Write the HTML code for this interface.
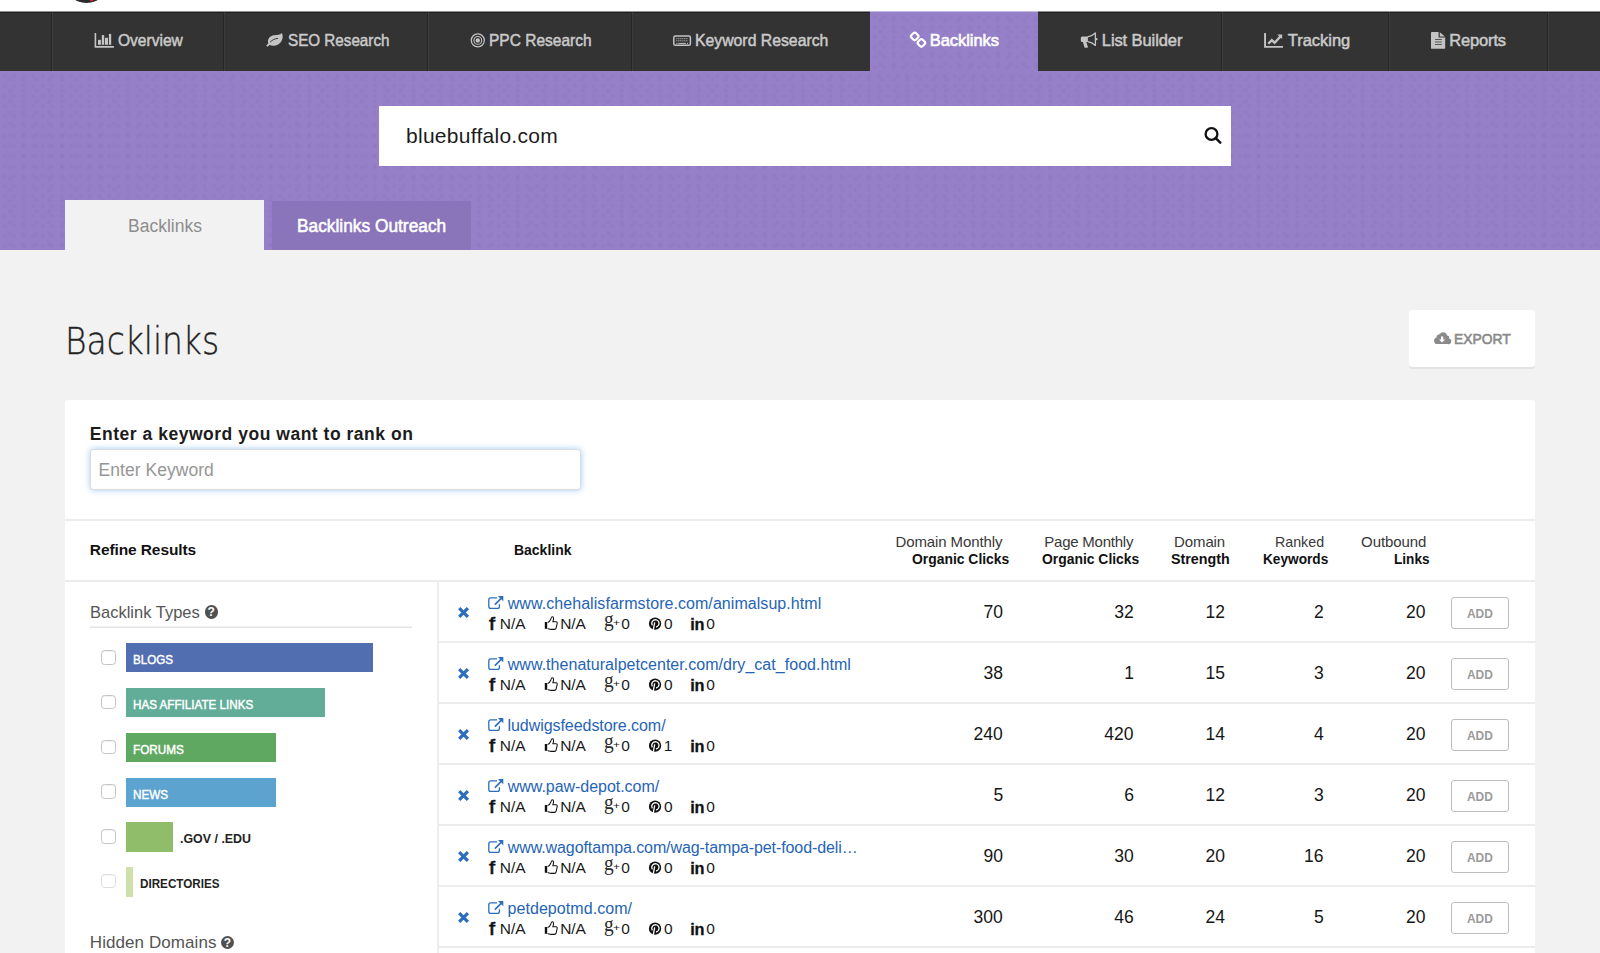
<!DOCTYPE html>
<html lang="en"><head><meta charset="utf-8"><title>Backlinks</title><style>
html,body{margin:0;padding:0}
body{width:1600px;height:953px;overflow:hidden;position:relative;background:#f2f2f2;font-family:"Liberation Sans",sans-serif}
.a{position:absolute}
.t{position:absolute;white-space:pre;line-height:normal}
#top{left:0;top:0;width:1600px;height:12px;background:#fff;border-bottom:1px solid #909090;box-sizing:border-box}
#nav{left:0;top:12px;width:1600px;height:59px;background:#333;border-top:1px solid #1f1f1f;box-sizing:border-box}
.dv{position:absolute;top:12px;width:1px;height:59px;background:#262626;box-shadow:1px 0 0 #3c3c3c}
#band{left:0;top:71px;width:1600px;height:179px;background:radial-gradient(circle,rgba(40,20,90,.035) 1px,rgba(40,20,90,0) 2.8px) 0 0/9.5px 10px,#9680c8 radial-gradient(circle,rgba(40,20,90,.03) 1px,rgba(40,20,90,0) 3px) 4px 3px/13px 11px}
#act{left:869.5px;top:11px;width:168.5px;height:60px;border-top:1px solid #c5b8e2;box-sizing:border-box;background:radial-gradient(circle,rgba(40,20,90,.035) 1px,rgba(40,20,90,0) 2.8px) 0 0/9.5px 10px,#9680c8 radial-gradient(circle,rgba(40,20,90,.03) 1px,rgba(40,20,90,0) 3px) 4px 3px/13px 11px}
#search{left:379px;top:106px;width:852px;height:60px;background:#fff}
#tab1{left:65px;top:200.2px;width:199px;height:50px;background:#f2f2f2}
#tab2{left:272px;top:201px;width:199px;height:49px;background:#8a74ba}
#export{left:1409px;top:310px;width:126px;height:57px;background:#fff;border-radius:3px;box-shadow:0 2px 0 #e2e2e2}
#card{left:65px;top:400px;width:1470px;height:560px;background:#fff;border-radius:3px}
#kw{left:90px;top:449px;width:490.5px;height:41.2px;box-sizing:border-box;background:#fff;border:1px solid #dcdcdc;border-radius:3.5px;box-shadow:0 0 6px rgba(100,170,240,.6)}
.hl{position:absolute;height:2px;background:#ececec}
.vl{position:absolute;width:2px;background:#ededed}
.bar{position:absolute;left:126px;height:29.3px}
.cb{position:absolute;left:101.3px;width:14.5px;height:14.5px;box-sizing:border-box;border:1px solid #c4c4c4;border-radius:3.5px;background:#fff;box-shadow:inset 0 1px 1px rgba(0,0,0,.06)}
.add{position:absolute;left:1450.8px;width:58.2px;height:31.5px;box-sizing:border-box;border:1px solid #bdbdbd;border-radius:3px;background:#fff}
.q{position:absolute;width:13.4px;height:13.4px;border-radius:50%;background:#505050;color:#fff;font:700 12px "Liberation Sans",sans-serif;text-align:center;line-height:14px}
</style></head><body>
<div class="a" id="top"></div>
<div class="a" style="left:64.2px;top:-42.2px;width:45.2px;height:45.2px;border-radius:50%;background:#2b2b2b;overflow:hidden"><div class="a" style="left:25.5px;top:42px;width:3px;height:1.3px;background:#e8202a"></div></div>
<div class="a" id="nav"></div>
<div class="dv" style="left:51px"></div>
<div class="dv" style="left:223px"></div>
<div class="dv" style="left:427px"></div>
<div class="dv" style="left:631px"></div>
<div class="dv" style="left:1221px"></div>
<div class="dv" style="left:1388px"></div>
<div class="dv" style="left:1547px"></div>
<div class="a" id="band"></div>
<div class="a" id="act"></div>
<div class="a" id="search"></div>
<div class="a" id="tab1"></div>
<div class="a" id="tab2"></div>
<div class="a" id="export"></div>
<div class="a" id="card"></div>
<div class="a" id="kw"></div>
<div class="hl" style="left:65px;top:519px;width:1470px"></div>
<div class="hl" style="left:65px;top:580px;width:1470px"></div>
<div class="vl" style="left:437px;top:582px;height:380px"></div>
<div class="hl" style="left:438px;top:641px;width:1097px"></div>
<div class="hl" style="left:438px;top:702px;width:1097px"></div>
<div class="hl" style="left:438px;top:763px;width:1097px"></div>
<div class="hl" style="left:438px;top:824px;width:1097px"></div>
<div class="hl" style="left:438px;top:885px;width:1097px"></div>
<div class="hl" style="left:438px;top:946px;width:1097px"></div>
<div class="hl" style="left:90px;top:626px;width:322.4px;height:2px;background:linear-gradient(#f0f0f0 50%,#e4e4e4 50%)"></div>
<div class="bar" style="top:643.2px;width:246.5px;background:#516eb0"></div>
<div class="bar" style="top:688.2px;width:199px;background:#62ad98"></div>
<div class="bar" style="top:733.2px;width:150.3px;background:#5fa862"></div>
<div class="bar" style="top:778px;width:150.3px;background:#5ca3d0"></div>
<div class="bar" style="top:822.4px;width:47px;background:#90bd69"></div>
<div class="bar" style="top:867.4px;width:7px;background:#cfe0ab"></div>
<div class="cb" style="top:650px"></div>
<div class="cb" style="top:694.7px"></div>
<div class="cb" style="top:739.5px"></div>
<div class="cb" style="top:784.3px"></div>
<div class="cb" style="top:829px"></div>
<div class="cb" style="top:873.8px;opacity:.55"></div>
<div class="add" style="top:597px"></div>
<div class="add" style="top:658px"></div>
<div class="add" style="top:719px"></div>
<div class="add" style="top:780px"></div>
<div class="add" style="top:841px"></div>
<div class="add" style="top:902px"></div>
<div class="q" style="left:204.6px;top:605.2px">?</div>
<div class="q" style="left:220.8px;top:935.5px">?</div>
<svg class="a" style="left:0;top:0" width="1600" height="953" viewBox="0 0 1600 953">

<!-- nav icons -->
<g fill="#c4c4c4">
<path d="M94.600 33v14.700h19.300v-1.700h-17.700v-13z"/>
<rect x="98" y="39.800" width="2.900" height="5"/><rect x="101.800" y="35.100" width="2.400" height="9.700"/><rect x="105" y="37.800" width="3" height="7"/><rect x="108.900" y="33.900" width="2.300" height="10.900"/>
<path d="M266.200 45.500l2.100-2.100c-1.300-3.800 1.200-7.500 5.800-8.100 3.300-.4 5.600-.3 7.700-2.300 1.600 2.900 1.300 7.800-2.600 10.800-3.200 2.400-7.200 2.400-9.600 1.200l-2.200 1.800z"/>
</g>
<path d="M270.400 41.900c2-2.200 4.400-3.200 7.200-3.500" stroke="#3a3a3a" stroke-width="1" fill="none" stroke-linecap="round"/>
<g fill="none" stroke="#c4c4c4">
<circle cx="477.800" cy="40.400" r="6.500" stroke-width="1.250"/><circle cx="477.800" cy="40.400" r="3.900" stroke-width="1.100"/>
<rect x="673.800" y="36.050" width="16.600" height="9.300" rx="1.600" stroke-width="1.500"/>
<path d="M676.300 38.700h11.800M676.300 40.800h11.800" stroke-width="1" stroke-dasharray="1.100 .9"/>
<path d="M676.300 43.400h1.100M678.300 43.400h7.600M686.900 43.400h1.200" stroke-width="1"/>
</g>
<circle cx="477.800" cy="40.400" r="2.200" fill="#c4c4c4"/>
<!-- chain -->
<g fill="none" stroke="#fff" stroke-width="2.200">
<rect x="911.500" y="33.200" width="6.400" height="6.400" rx="2" transform="rotate(45 914.700 36.400)"/>
<rect x="918.200" y="39.700" width="6.400" height="6.400" rx="2" transform="rotate(45 921.400 42.900)"/>
</g>
<!-- bullhorn -->
<g fill="#c4c4c4">
<path d="M1082.300 36.600h5.600v5.400h-1.600l1.700 5.200c-.9.700-2.600.8-3.500.2l-1.600-5.400h-.6a1.500 1.500 0 0 1-1.500-1.500v-2.400a1.500 1.500 0 0 1 1.500-1.500z"/>
<circle cx="1096.500" cy="39.200" r="1.100"/>
</g>
<path d="M1087.700 36.900c3.200-.6 5.600-2 7.700-3.900v12.400c-2.100-1.900-4.500-3.200-7.700-3.700" fill="none" stroke="#c4c4c4" stroke-width="1.300" stroke-linejoin="round"/>
<!-- line chart -->
<g fill="#c4c4c4">
<path d="M1264.100 33v14.800h18.900v-1.800h-17v-13z"/>
<path d="M1277.200 34.500h4.900v4.600z"/>
</g>
<path d="M1268.300 43.800l3.500-3.700 2.800 2.600 5.800-6.200" fill="none" stroke="#c4c4c4" stroke-width="2.400"/>
<!-- file text -->
<path d="M1431.900 32h6.700v5.600h6.600v10.300a.9.9 0 0 1-.9.900h-12.400a.9.900 0 0 1-.9-.9v-15a.9.900 0 0 1 .9-.9zM1439.800 32.300l5.100 4.300h-5.100z" fill="#c4c4c4"/>
<path d="M1435 39.500h6.800M1435 42h6.800M1435 44.500h6.800" stroke="#555" stroke-width="1"/>
<!-- search -->
<circle cx="1211.500" cy="134" r="5.900" fill="none" stroke="#111" stroke-width="2.300"/>
<path d="M1215.700 138.200l4.600 4.400" stroke="#111" stroke-width="2.500" stroke-linecap="round"/>
<!-- cloud download -->
<path d="M1437.300 344.100a3.300 3.300 0 0 1-.7-6.500 3 3 0 0 1 3.100-3.300 4 4 0 0 1 7.400 1.300 2.300 2.300 0 0 1 2 2.800 2.900 2.900 0 0 1-1.500 5.700z" fill="#8a8a8a"/>
<path d="M1441 336.600h2.200v2.800h2l-3.100 3.200-3.100-3.200h2z" fill="#fff"/>
<g transform="translate(0 0)">
<path d="M459.200 608.100l8.700 8.700M467.900 608.100l-8.700 8.700" stroke="#2a6ebd" stroke-width="3.200" fill="none"/>
<path d="M497 597.9h-6.3a1.9 1.9 0 0 0-1.9 1.9v6.7a1.9 1.9 0 0 0 1.9 1.9h6.8a1.9 1.9 0 0 0 1.9-1.9v-2.2" stroke="#2a6ebd" stroke-width="1.3" fill="none"/>
<path d="M494.9 604.6l6.2-6.2" stroke="#2a6ebd" stroke-width="1.6" fill="none"/>
<path d="M497.9 596h5.4v5.2z" fill="#2a6ebd"/>
<!-- thumbs up -->
<rect x="544.8" y="622" width="2.4" height="6.8" fill="#111"/>
<path d="M547.6 622.6c1.6-.3 2.6-2 3.2-3.6.4-1.2.6-2.2 1.5-2.2 1.3 0 1.5 1.6 1.1 3l-.6 2h3.3c.9 0 1.3.8 1.1 1.600l-1.100 4.8c-.2.8-.8 1.200-1.600 1.200h-3.500c-1.200 0-2.300-.6-3.400-.8" stroke="#111" stroke-width="1.05" fill="none" stroke-linejoin="round"/>
<!-- pinterest -->
<circle cx="655.050" cy="623.700" r="6.150" fill="#111"/>
<path d="M652.410 625.490A3.650 3.650 0 1 1 656.030 626.990M654.700 622.300l-1.400 7.600" stroke="#fff" stroke-width="1.300" fill="none"/>
</g>
<g transform="translate(0 61)">
<path d="M459.200 608.100l8.700 8.700M467.900 608.100l-8.700 8.700" stroke="#2a6ebd" stroke-width="3.200" fill="none"/>
<path d="M497 597.9h-6.3a1.9 1.9 0 0 0-1.9 1.9v6.7a1.9 1.9 0 0 0 1.9 1.9h6.8a1.9 1.9 0 0 0 1.9-1.9v-2.2" stroke="#2a6ebd" stroke-width="1.3" fill="none"/>
<path d="M494.9 604.6l6.2-6.2" stroke="#2a6ebd" stroke-width="1.6" fill="none"/>
<path d="M497.9 596h5.4v5.2z" fill="#2a6ebd"/>
<!-- thumbs up -->
<rect x="544.8" y="622" width="2.4" height="6.8" fill="#111"/>
<path d="M547.6 622.6c1.6-.3 2.6-2 3.2-3.6.4-1.2.6-2.2 1.5-2.2 1.3 0 1.5 1.6 1.1 3l-.6 2h3.3c.9 0 1.3.8 1.1 1.600l-1.100 4.8c-.2.8-.8 1.200-1.600 1.200h-3.500c-1.200 0-2.300-.6-3.400-.8" stroke="#111" stroke-width="1.05" fill="none" stroke-linejoin="round"/>
<!-- pinterest -->
<circle cx="655.050" cy="623.700" r="6.150" fill="#111"/>
<path d="M652.410 625.490A3.650 3.650 0 1 1 656.030 626.990M654.700 622.300l-1.400 7.600" stroke="#fff" stroke-width="1.300" fill="none"/>
</g>
<g transform="translate(0 122)">
<path d="M459.200 608.100l8.700 8.700M467.900 608.100l-8.700 8.700" stroke="#2a6ebd" stroke-width="3.200" fill="none"/>
<path d="M497 597.9h-6.3a1.9 1.9 0 0 0-1.9 1.9v6.7a1.9 1.9 0 0 0 1.9 1.9h6.8a1.9 1.9 0 0 0 1.9-1.9v-2.2" stroke="#2a6ebd" stroke-width="1.3" fill="none"/>
<path d="M494.9 604.6l6.2-6.2" stroke="#2a6ebd" stroke-width="1.6" fill="none"/>
<path d="M497.9 596h5.4v5.2z" fill="#2a6ebd"/>
<!-- thumbs up -->
<rect x="544.8" y="622" width="2.4" height="6.8" fill="#111"/>
<path d="M547.6 622.6c1.6-.3 2.6-2 3.2-3.6.4-1.2.6-2.2 1.5-2.2 1.3 0 1.5 1.6 1.1 3l-.6 2h3.3c.9 0 1.3.8 1.1 1.600l-1.100 4.8c-.2.8-.8 1.200-1.600 1.200h-3.500c-1.200 0-2.300-.6-3.400-.8" stroke="#111" stroke-width="1.05" fill="none" stroke-linejoin="round"/>
<!-- pinterest -->
<circle cx="655.050" cy="623.700" r="6.150" fill="#111"/>
<path d="M652.410 625.490A3.650 3.650 0 1 1 656.030 626.990M654.700 622.300l-1.400 7.600" stroke="#fff" stroke-width="1.300" fill="none"/>
</g>
<g transform="translate(0 183)">
<path d="M459.200 608.100l8.700 8.700M467.900 608.100l-8.700 8.700" stroke="#2a6ebd" stroke-width="3.200" fill="none"/>
<path d="M497 597.9h-6.3a1.9 1.9 0 0 0-1.9 1.9v6.7a1.9 1.9 0 0 0 1.9 1.9h6.8a1.9 1.9 0 0 0 1.9-1.9v-2.2" stroke="#2a6ebd" stroke-width="1.3" fill="none"/>
<path d="M494.9 604.6l6.2-6.2" stroke="#2a6ebd" stroke-width="1.6" fill="none"/>
<path d="M497.9 596h5.4v5.2z" fill="#2a6ebd"/>
<!-- thumbs up -->
<rect x="544.8" y="622" width="2.4" height="6.8" fill="#111"/>
<path d="M547.6 622.6c1.6-.3 2.6-2 3.2-3.6.4-1.2.6-2.2 1.5-2.2 1.3 0 1.5 1.6 1.1 3l-.6 2h3.3c.9 0 1.3.8 1.1 1.600l-1.100 4.8c-.2.8-.8 1.200-1.600 1.200h-3.500c-1.200 0-2.300-.6-3.400-.8" stroke="#111" stroke-width="1.05" fill="none" stroke-linejoin="round"/>
<!-- pinterest -->
<circle cx="655.050" cy="623.700" r="6.150" fill="#111"/>
<path d="M652.410 625.490A3.650 3.650 0 1 1 656.030 626.990M654.700 622.300l-1.400 7.600" stroke="#fff" stroke-width="1.300" fill="none"/>
</g>
<g transform="translate(0 244)">
<path d="M459.200 608.100l8.700 8.700M467.900 608.100l-8.700 8.700" stroke="#2a6ebd" stroke-width="3.200" fill="none"/>
<path d="M497 597.9h-6.3a1.9 1.9 0 0 0-1.9 1.9v6.7a1.9 1.9 0 0 0 1.9 1.9h6.8a1.9 1.9 0 0 0 1.9-1.9v-2.2" stroke="#2a6ebd" stroke-width="1.3" fill="none"/>
<path d="M494.9 604.6l6.2-6.2" stroke="#2a6ebd" stroke-width="1.6" fill="none"/>
<path d="M497.9 596h5.4v5.2z" fill="#2a6ebd"/>
<!-- thumbs up -->
<rect x="544.8" y="622" width="2.4" height="6.8" fill="#111"/>
<path d="M547.6 622.6c1.6-.3 2.6-2 3.2-3.6.4-1.2.6-2.2 1.5-2.2 1.3 0 1.5 1.6 1.1 3l-.6 2h3.3c.9 0 1.3.8 1.1 1.600l-1.100 4.8c-.2.8-.8 1.200-1.600 1.200h-3.500c-1.200 0-2.300-.6-3.400-.8" stroke="#111" stroke-width="1.05" fill="none" stroke-linejoin="round"/>
<!-- pinterest -->
<circle cx="655.050" cy="623.700" r="6.150" fill="#111"/>
<path d="M652.410 625.490A3.650 3.650 0 1 1 656.030 626.990M654.700 622.300l-1.400 7.600" stroke="#fff" stroke-width="1.300" fill="none"/>
</g>
<g transform="translate(0 305)">
<path d="M459.200 608.100l8.700 8.700M467.900 608.100l-8.700 8.700" stroke="#2a6ebd" stroke-width="3.200" fill="none"/>
<path d="M497 597.9h-6.3a1.9 1.9 0 0 0-1.9 1.9v6.7a1.9 1.9 0 0 0 1.9 1.9h6.8a1.9 1.9 0 0 0 1.9-1.9v-2.2" stroke="#2a6ebd" stroke-width="1.3" fill="none"/>
<path d="M494.9 604.6l6.2-6.2" stroke="#2a6ebd" stroke-width="1.6" fill="none"/>
<path d="M497.9 596h5.4v5.2z" fill="#2a6ebd"/>
<!-- thumbs up -->
<rect x="544.8" y="622" width="2.4" height="6.8" fill="#111"/>
<path d="M547.6 622.6c1.6-.3 2.6-2 3.2-3.6.4-1.2.6-2.2 1.5-2.2 1.3 0 1.5 1.6 1.1 3l-.6 2h3.3c.9 0 1.3.8 1.1 1.600l-1.100 4.8c-.2.8-.8 1.200-1.600 1.200h-3.500c-1.200 0-2.300-.6-3.400-.8" stroke="#111" stroke-width="1.05" fill="none" stroke-linejoin="round"/>
<!-- pinterest -->
<circle cx="655.050" cy="623.700" r="6.150" fill="#111"/>
<path d="M652.410 625.490A3.650 3.650 0 1 1 656.030 626.990M654.700 622.300l-1.400 7.600" stroke="#fff" stroke-width="1.300" fill="none"/>
</g>
</svg>

<span class="t" style="left:118.30px;top:31px;color:#cacaca;font:400 16.5px 'Liberation Sans', sans-serif;transform:scaleX(0.9420);transform-origin:0 0;-webkit-text-stroke:0.5px currentColor;">Overview</span>
<span class="t" style="left:287.80px;top:31px;color:#cacaca;font:400 16.5px 'Liberation Sans', sans-serif;transform:scaleX(0.9220);transform-origin:0 0;-webkit-text-stroke:0.5px currentColor;">SEO Research</span>
<span class="t" style="left:488.80px;top:31px;color:#cacaca;font:400 16.5px 'Liberation Sans', sans-serif;transform:scaleX(0.9398);transform-origin:0 0;-webkit-text-stroke:0.5px currentColor;">PPC Research</span>
<span class="t" style="left:695.30px;top:31px;color:#cacaca;font:400 16.5px 'Liberation Sans', sans-serif;transform:scaleX(0.9565);transform-origin:0 0;-webkit-text-stroke:0.5px currentColor;">Keyword Research</span>
<span class="t" style="left:929.80px;top:31px;color:#fff;font:400 16.5px 'Liberation Sans', sans-serif;letter-spacing:-0.062px;-webkit-text-stroke:0.6px currentColor;">Backlinks</span>
<span class="t" style="left:1101.80px;top:31px;color:#cacaca;font:400 16.5px 'Liberation Sans', sans-serif;letter-spacing:-0.091px;-webkit-text-stroke:0.5px currentColor;">List Builder</span>
<span class="t" style="left:1287.80px;top:31px;color:#cacaca;font:400 16.5px 'Liberation Sans', sans-serif;letter-spacing:-0.036px;-webkit-text-stroke:0.5px currentColor;">Tracking</span>
<span class="t" style="left:1449.30px;top:31px;color:#cacaca;font:400 16.5px 'Liberation Sans', sans-serif;letter-spacing:-0.167px;-webkit-text-stroke:0.5px currentColor;">Reports</span>
<span class="t" style="left:64.60px;top:320px;color:#222;font:200 36.9px 'DejaVu Sans Light', 'DejaVu Sans', sans-serif;transform:scaleX(0.8910);transform-origin:0 0;-webkit-text-stroke:0.35px currentColor;">Backlinks</span>
<span class="t" style="left:406.05px;top:124px;color:#1c1c1c;font:400 21px 'Liberation Sans', sans-serif;letter-spacing:0.264px;">bluebuffalo.com</span>
<span class="t" style="left:127.70px;top:216px;color:#8d8d8d;font:400 18px 'Liberation Sans', sans-serif;transform:scaleX(0.9720);transform-origin:0 0;">Backlinks</span>
<span class="t" style="left:296.80px;top:216px;color:#fff;font:400 18px 'Liberation Sans', sans-serif;transform:scaleX(0.9621);transform-origin:0 0;-webkit-text-stroke:0.55px currentColor;">Backlinks Outreach</span>
<span class="t" style="left:1454.30px;top:330px;color:#8a8a8a;font:400 15.4px 'Liberation Sans', sans-serif;transform:scaleX(0.8984);transform-origin:0 0;-webkit-text-stroke:0.65px currentColor;">EXPORT</span>
<span class="t" style="left:89.80px;top:424px;color:#1c1c1c;font:700 17.5px 'Liberation Sans', sans-serif;letter-spacing:0.521px;">Enter a keyword you want to rank on</span>
<span class="t" style="left:98.55px;top:460px;color:#969696;font:400 17.5px 'Liberation Sans', sans-serif;letter-spacing:0.038px;">Enter Keyword</span>
<span class="t" style="left:89.80px;top:541px;color:#111;font:700 15.5px 'Liberation Sans', sans-serif;letter-spacing:-0.100px;">Refine Results</span>
<span class="t" style="left:513.90px;top:541px;color:#111;font:700 15.3px 'Liberation Sans', sans-serif;transform:scaleX(0.9129);transform-origin:0 0;">Backlink</span>
<span class="t" style="left:895.55px;top:533px;color:#383838;font:400 15px 'Liberation Sans', sans-serif;letter-spacing:-0.119px;">Domain Monthly</span>
<span class="t" style="left:911.55px;top:550px;color:#111;font:700 15.3px 'Liberation Sans', sans-serif;transform:scaleX(0.9080);transform-origin:0 0;">Organic Clicks</span>
<span class="t" style="left:1044.30px;top:533px;color:#383838;font:400 15px 'Liberation Sans', sans-serif;letter-spacing:-0.232px;">Page Monthly</span>
<span class="t" style="left:1042.30px;top:550px;color:#111;font:700 15.3px 'Liberation Sans', sans-serif;transform:scaleX(0.9080);transform-origin:0 0;">Organic Clicks</span>
<span class="t" style="left:1174.05px;top:533px;color:#383838;font:400 15px 'Liberation Sans', sans-serif;letter-spacing:-0.110px;">Domain</span>
<span class="t" style="left:1171.30px;top:550px;color:#111;font:700 15.3px 'Liberation Sans', sans-serif;transform:scaleX(0.9344);transform-origin:0 0;">Strength</span>
<span class="t" style="left:1274.80px;top:533px;color:#383838;font:400 15px 'Liberation Sans', sans-serif;transform:scaleX(0.9490);transform-origin:0 0;">Ranked</span>
<span class="t" style="left:1262.55px;top:550px;color:#111;font:700 15.3px 'Liberation Sans', sans-serif;transform:scaleX(0.8924);transform-origin:0 0;">Keywords</span>
<span class="t" style="left:1361.05px;top:533px;color:#383838;font:400 15px 'Liberation Sans', sans-serif;letter-spacing:-0.079px;">Outbound</span>
<span class="t" style="left:1394.30px;top:550px;color:#111;font:700 15.3px 'Liberation Sans', sans-serif;transform:scaleX(0.8910);transform-origin:0 0;">Links</span>
<span class="t" style="left:89.80px;top:603px;color:#555;font:400 17px 'Liberation Sans', sans-serif;transform:scaleX(0.9705);transform-origin:0 0;">Backlink Types</span>
<span class="t" style="left:89.80px;top:933px;color:#555;font:400 17px 'Liberation Sans', sans-serif;letter-spacing:0.073px;">Hidden Domains</span>
<span class="t" style="left:133.00px;top:652px;color:#fff;font:400 13.1px 'Liberation Sans', sans-serif;transform:scaleX(0.8864);transform-origin:0 0;-webkit-text-stroke:0.45px currentColor;">BLOGS</span>
<span class="t" style="left:133.00px;top:697px;color:#fff;font:400 13.1px 'Liberation Sans', sans-serif;transform:scaleX(0.8899);transform-origin:0 0;-webkit-text-stroke:0.45px currentColor;">HAS AFFILIATE LINKS</span>
<span class="t" style="left:133.00px;top:742px;color:#fff;font:400 13.1px 'Liberation Sans', sans-serif;transform:scaleX(0.8973);transform-origin:0 0;-webkit-text-stroke:0.45px currentColor;">FORUMS</span>
<span class="t" style="left:133.00px;top:787px;color:#fff;font:400 13.1px 'Liberation Sans', sans-serif;transform:scaleX(0.8947);transform-origin:0 0;-webkit-text-stroke:0.45px currentColor;">NEWS</span>
<span class="t" style="left:179.80px;top:831px;color:#222;font:700 13px 'Liberation Sans', sans-serif;transform:scaleX(0.9548);transform-origin:0 0;">.GOV / .EDU</span>
<span class="t" style="left:140.30px;top:876px;color:#222;font:700 13px 'Liberation Sans', sans-serif;transform:scaleX(0.8989);transform-origin:0 0;">DIRECTORIES</span>
<span class="t" style="left:507.75px;top:595px;color:#1f64b6;font:400 16px 'Liberation Sans', sans-serif;letter-spacing:0.058px;">www.chehalisfarmstore.com/animalsup.html</span>
<span class="t" style="left:489.00px;top:614px;color:#111;font:400 18px 'Liberation Sans', sans-serif;transform:scaleX(1.2167);transform-origin:0 0;-webkit-text-stroke:0.55px currentColor;">f</span>
<span class="t" style="left:499.75px;top:615px;color:#1a1a1a;font:400 15.5px 'Liberation Sans', sans-serif;">N/A</span>
<span class="t" style="left:560.25px;top:615px;color:#1a1a1a;font:400 15.5px 'Liberation Sans', sans-serif;letter-spacing:-0.125px;">N/A</span>
<span class="t" style="left:621.15px;top:615px;color:#1a1a1a;font:400 15.5px 'Liberation Sans', sans-serif;">0</span>
<span class="t" style="left:663.95px;top:615px;color:#1a1a1a;font:400 15.5px 'Liberation Sans', sans-serif;">0</span>
<span class="t" style="left:690.25px;top:615px;color:#111;font:700 16.3px 'Liberation Sans', sans-serif;letter-spacing:-0.250px;-webkit-text-stroke:0.3px currentColor;">in</span>
<span class="t" style="left:613.30px;top:618px;color:#111;font:400 8.5px 'Liberation Sans', sans-serif;transform:scaleX(1.4000);transform-origin:0 0;">+</span>
<span class="t" style="left:604.30px;top:608px;color:#2a2a2a;font:400 20px 'Liberation Serif', serif;transform:scaleX(0.9667);transform-origin:0 0;">g</span>
<span class="t" style="left:706.30px;top:615px;color:#1a1a1a;font:400 15.5px 'Liberation Sans', sans-serif;">0</span>
<span class="t" style="left:983.50px;top:602px;color:#161616;font:400 17.5px 'Liberation Sans', sans-serif;">70</span>
<span class="t" style="left:1114.25px;top:602px;color:#161616;font:400 17.5px 'Liberation Sans', sans-serif;">32</span>
<span class="t" style="left:1205.50px;top:602px;color:#161616;font:400 17.5px 'Liberation Sans', sans-serif;">12</span>
<span class="t" style="left:1314.00px;top:602px;color:#161616;font:400 17.5px 'Liberation Sans', sans-serif;">2</span>
<span class="t" style="left:1406.00px;top:602px;color:#161616;font:400 17.5px 'Liberation Sans', sans-serif;">20</span>
<span class="t" style="left:1467.30px;top:606px;color:#9a9a9a;font:700 13px 'Liberation Sans', sans-serif;transform:scaleX(0.9179);transform-origin:0 0;">ADD</span>
<span class="t" style="left:507.75px;top:656px;color:#1f64b6;font:400 16px 'Liberation Sans', sans-serif;letter-spacing:0.035px;">www.thenaturalpetcenter.com/dry_cat_food.html</span>
<span class="t" style="left:489.00px;top:675px;color:#111;font:400 18px 'Liberation Sans', sans-serif;transform:scaleX(1.2167);transform-origin:0 0;-webkit-text-stroke:0.55px currentColor;">f</span>
<span class="t" style="left:499.75px;top:676px;color:#1a1a1a;font:400 15.5px 'Liberation Sans', sans-serif;">N/A</span>
<span class="t" style="left:560.25px;top:676px;color:#1a1a1a;font:400 15.5px 'Liberation Sans', sans-serif;letter-spacing:-0.125px;">N/A</span>
<span class="t" style="left:621.15px;top:676px;color:#1a1a1a;font:400 15.5px 'Liberation Sans', sans-serif;">0</span>
<span class="t" style="left:663.95px;top:676px;color:#1a1a1a;font:400 15.5px 'Liberation Sans', sans-serif;">0</span>
<span class="t" style="left:690.25px;top:676px;color:#111;font:700 16.3px 'Liberation Sans', sans-serif;letter-spacing:-0.250px;-webkit-text-stroke:0.3px currentColor;">in</span>
<span class="t" style="left:613.30px;top:679px;color:#111;font:400 8.5px 'Liberation Sans', sans-serif;transform:scaleX(1.4000);transform-origin:0 0;">+</span>
<span class="t" style="left:604.30px;top:669px;color:#2a2a2a;font:400 20px 'Liberation Serif', serif;transform:scaleX(0.9667);transform-origin:0 0;">g</span>
<span class="t" style="left:706.30px;top:676px;color:#1a1a1a;font:400 15.5px 'Liberation Sans', sans-serif;">0</span>
<span class="t" style="left:983.50px;top:663px;color:#161616;font:400 17.5px 'Liberation Sans', sans-serif;">38</span>
<span class="t" style="left:1124.25px;top:663px;color:#161616;font:400 17.5px 'Liberation Sans', sans-serif;">1</span>
<span class="t" style="left:1205.50px;top:663px;color:#161616;font:400 17.5px 'Liberation Sans', sans-serif;">15</span>
<span class="t" style="left:1314.00px;top:663px;color:#161616;font:400 17.5px 'Liberation Sans', sans-serif;">3</span>
<span class="t" style="left:1406.00px;top:663px;color:#161616;font:400 17.5px 'Liberation Sans', sans-serif;">20</span>
<span class="t" style="left:1467.30px;top:667px;color:#9a9a9a;font:700 13px 'Liberation Sans', sans-serif;transform:scaleX(0.9179);transform-origin:0 0;">ADD</span>
<span class="t" style="left:507.50px;top:717px;color:#1f64b6;font:400 16px 'Liberation Sans', sans-serif;letter-spacing:-0.055px;">ludwigsfeedstore.com/</span>
<span class="t" style="left:489.00px;top:736px;color:#111;font:400 18px 'Liberation Sans', sans-serif;transform:scaleX(1.2167);transform-origin:0 0;-webkit-text-stroke:0.55px currentColor;">f</span>
<span class="t" style="left:499.75px;top:737px;color:#1a1a1a;font:400 15.5px 'Liberation Sans', sans-serif;">N/A</span>
<span class="t" style="left:560.25px;top:737px;color:#1a1a1a;font:400 15.5px 'Liberation Sans', sans-serif;letter-spacing:-0.125px;">N/A</span>
<span class="t" style="left:621.15px;top:737px;color:#1a1a1a;font:400 15.5px 'Liberation Sans', sans-serif;">0</span>
<span class="t" style="left:663.75px;top:737px;color:#1a1a1a;font:400 15.5px 'Liberation Sans', sans-serif;">1</span>
<span class="t" style="left:690.25px;top:737px;color:#111;font:700 16.3px 'Liberation Sans', sans-serif;letter-spacing:-0.250px;-webkit-text-stroke:0.3px currentColor;">in</span>
<span class="t" style="left:613.30px;top:740px;color:#111;font:400 8.5px 'Liberation Sans', sans-serif;transform:scaleX(1.4000);transform-origin:0 0;">+</span>
<span class="t" style="left:604.30px;top:730px;color:#2a2a2a;font:400 20px 'Liberation Serif', serif;transform:scaleX(0.9667);transform-origin:0 0;">g</span>
<span class="t" style="left:706.30px;top:737px;color:#1a1a1a;font:400 15.5px 'Liberation Sans', sans-serif;">0</span>
<span class="t" style="left:973.50px;top:724px;color:#161616;font:400 17.5px 'Liberation Sans', sans-serif;">240</span>
<span class="t" style="left:1104.25px;top:724px;color:#161616;font:400 17.5px 'Liberation Sans', sans-serif;">420</span>
<span class="t" style="left:1205.50px;top:724px;color:#161616;font:400 17.5px 'Liberation Sans', sans-serif;">14</span>
<span class="t" style="left:1314.00px;top:724px;color:#161616;font:400 17.5px 'Liberation Sans', sans-serif;">4</span>
<span class="t" style="left:1406.00px;top:724px;color:#161616;font:400 17.5px 'Liberation Sans', sans-serif;">20</span>
<span class="t" style="left:1467.30px;top:728px;color:#9a9a9a;font:700 13px 'Liberation Sans', sans-serif;transform:scaleX(0.9179);transform-origin:0 0;">ADD</span>
<span class="t" style="left:507.75px;top:778px;color:#1f64b6;font:400 16px 'Liberation Sans', sans-serif;letter-spacing:-0.038px;">www.paw-depot.com/</span>
<span class="t" style="left:489.00px;top:797px;color:#111;font:400 18px 'Liberation Sans', sans-serif;transform:scaleX(1.2167);transform-origin:0 0;-webkit-text-stroke:0.55px currentColor;">f</span>
<span class="t" style="left:499.75px;top:798px;color:#1a1a1a;font:400 15.5px 'Liberation Sans', sans-serif;">N/A</span>
<span class="t" style="left:560.25px;top:798px;color:#1a1a1a;font:400 15.5px 'Liberation Sans', sans-serif;letter-spacing:-0.125px;">N/A</span>
<span class="t" style="left:621.15px;top:798px;color:#1a1a1a;font:400 15.5px 'Liberation Sans', sans-serif;">0</span>
<span class="t" style="left:663.95px;top:798px;color:#1a1a1a;font:400 15.5px 'Liberation Sans', sans-serif;">0</span>
<span class="t" style="left:690.25px;top:798px;color:#111;font:700 16.3px 'Liberation Sans', sans-serif;letter-spacing:-0.250px;-webkit-text-stroke:0.3px currentColor;">in</span>
<span class="t" style="left:613.30px;top:801px;color:#111;font:400 8.5px 'Liberation Sans', sans-serif;transform:scaleX(1.4000);transform-origin:0 0;">+</span>
<span class="t" style="left:604.30px;top:791px;color:#2a2a2a;font:400 20px 'Liberation Serif', serif;transform:scaleX(0.9667);transform-origin:0 0;">g</span>
<span class="t" style="left:706.30px;top:798px;color:#1a1a1a;font:400 15.5px 'Liberation Sans', sans-serif;">0</span>
<span class="t" style="left:993.50px;top:785px;color:#161616;font:400 17.5px 'Liberation Sans', sans-serif;">5</span>
<span class="t" style="left:1124.25px;top:785px;color:#161616;font:400 17.5px 'Liberation Sans', sans-serif;">6</span>
<span class="t" style="left:1205.50px;top:785px;color:#161616;font:400 17.5px 'Liberation Sans', sans-serif;">12</span>
<span class="t" style="left:1314.00px;top:785px;color:#161616;font:400 17.5px 'Liberation Sans', sans-serif;">3</span>
<span class="t" style="left:1406.00px;top:785px;color:#161616;font:400 17.5px 'Liberation Sans', sans-serif;">20</span>
<span class="t" style="left:1467.30px;top:789px;color:#9a9a9a;font:700 13px 'Liberation Sans', sans-serif;transform:scaleX(0.9179);transform-origin:0 0;">ADD</span>
<span class="t" style="left:507.75px;top:839px;color:#1f64b6;font:400 16px 'Liberation Sans', sans-serif;letter-spacing:-0.094px;">www.wagoftampa.com/wag-tampa-pet-food-deli…</span>
<span class="t" style="left:489.00px;top:858px;color:#111;font:400 18px 'Liberation Sans', sans-serif;transform:scaleX(1.2167);transform-origin:0 0;-webkit-text-stroke:0.55px currentColor;">f</span>
<span class="t" style="left:499.75px;top:859px;color:#1a1a1a;font:400 15.5px 'Liberation Sans', sans-serif;">N/A</span>
<span class="t" style="left:560.25px;top:859px;color:#1a1a1a;font:400 15.5px 'Liberation Sans', sans-serif;letter-spacing:-0.125px;">N/A</span>
<span class="t" style="left:621.15px;top:859px;color:#1a1a1a;font:400 15.5px 'Liberation Sans', sans-serif;">0</span>
<span class="t" style="left:663.95px;top:859px;color:#1a1a1a;font:400 15.5px 'Liberation Sans', sans-serif;">0</span>
<span class="t" style="left:690.25px;top:859px;color:#111;font:700 16.3px 'Liberation Sans', sans-serif;letter-spacing:-0.250px;-webkit-text-stroke:0.3px currentColor;">in</span>
<span class="t" style="left:613.30px;top:862px;color:#111;font:400 8.5px 'Liberation Sans', sans-serif;transform:scaleX(1.4000);transform-origin:0 0;">+</span>
<span class="t" style="left:604.30px;top:852px;color:#2a2a2a;font:400 20px 'Liberation Serif', serif;transform:scaleX(0.9667);transform-origin:0 0;">g</span>
<span class="t" style="left:706.30px;top:859px;color:#1a1a1a;font:400 15.5px 'Liberation Sans', sans-serif;">0</span>
<span class="t" style="left:983.50px;top:846px;color:#161616;font:400 17.5px 'Liberation Sans', sans-serif;">90</span>
<span class="t" style="left:1114.25px;top:846px;color:#161616;font:400 17.5px 'Liberation Sans', sans-serif;">30</span>
<span class="t" style="left:1205.50px;top:846px;color:#161616;font:400 17.5px 'Liberation Sans', sans-serif;">20</span>
<span class="t" style="left:1304.00px;top:846px;color:#161616;font:400 17.5px 'Liberation Sans', sans-serif;">16</span>
<span class="t" style="left:1406.00px;top:846px;color:#161616;font:400 17.5px 'Liberation Sans', sans-serif;">20</span>
<span class="t" style="left:1467.30px;top:850px;color:#9a9a9a;font:700 13px 'Liberation Sans', sans-serif;transform:scaleX(0.9179);transform-origin:0 0;">ADD</span>
<span class="t" style="left:507.50px;top:900px;color:#1f64b6;font:400 16px 'Liberation Sans', sans-serif;letter-spacing:0.064px;">petdepotmd.com/</span>
<span class="t" style="left:489.00px;top:919px;color:#111;font:400 18px 'Liberation Sans', sans-serif;transform:scaleX(1.2167);transform-origin:0 0;-webkit-text-stroke:0.55px currentColor;">f</span>
<span class="t" style="left:499.75px;top:920px;color:#1a1a1a;font:400 15.5px 'Liberation Sans', sans-serif;">N/A</span>
<span class="t" style="left:560.25px;top:920px;color:#1a1a1a;font:400 15.5px 'Liberation Sans', sans-serif;letter-spacing:-0.125px;">N/A</span>
<span class="t" style="left:621.15px;top:920px;color:#1a1a1a;font:400 15.5px 'Liberation Sans', sans-serif;">0</span>
<span class="t" style="left:663.95px;top:920px;color:#1a1a1a;font:400 15.5px 'Liberation Sans', sans-serif;">0</span>
<span class="t" style="left:690.25px;top:920px;color:#111;font:700 16.3px 'Liberation Sans', sans-serif;letter-spacing:-0.250px;-webkit-text-stroke:0.3px currentColor;">in</span>
<span class="t" style="left:613.30px;top:923px;color:#111;font:400 8.5px 'Liberation Sans', sans-serif;transform:scaleX(1.4000);transform-origin:0 0;">+</span>
<span class="t" style="left:604.30px;top:913px;color:#2a2a2a;font:400 20px 'Liberation Serif', serif;transform:scaleX(0.9667);transform-origin:0 0;">g</span>
<span class="t" style="left:706.30px;top:920px;color:#1a1a1a;font:400 15.5px 'Liberation Sans', sans-serif;">0</span>
<span class="t" style="left:973.50px;top:907px;color:#161616;font:400 17.5px 'Liberation Sans', sans-serif;">300</span>
<span class="t" style="left:1114.25px;top:907px;color:#161616;font:400 17.5px 'Liberation Sans', sans-serif;">46</span>
<span class="t" style="left:1205.50px;top:907px;color:#161616;font:400 17.5px 'Liberation Sans', sans-serif;">24</span>
<span class="t" style="left:1314.00px;top:907px;color:#161616;font:400 17.5px 'Liberation Sans', sans-serif;">5</span>
<span class="t" style="left:1406.00px;top:907px;color:#161616;font:400 17.5px 'Liberation Sans', sans-serif;">20</span>
<span class="t" style="left:1467.30px;top:911px;color:#9a9a9a;font:700 13px 'Liberation Sans', sans-serif;transform:scaleX(0.9179);transform-origin:0 0;">ADD</span>
</body></html>
